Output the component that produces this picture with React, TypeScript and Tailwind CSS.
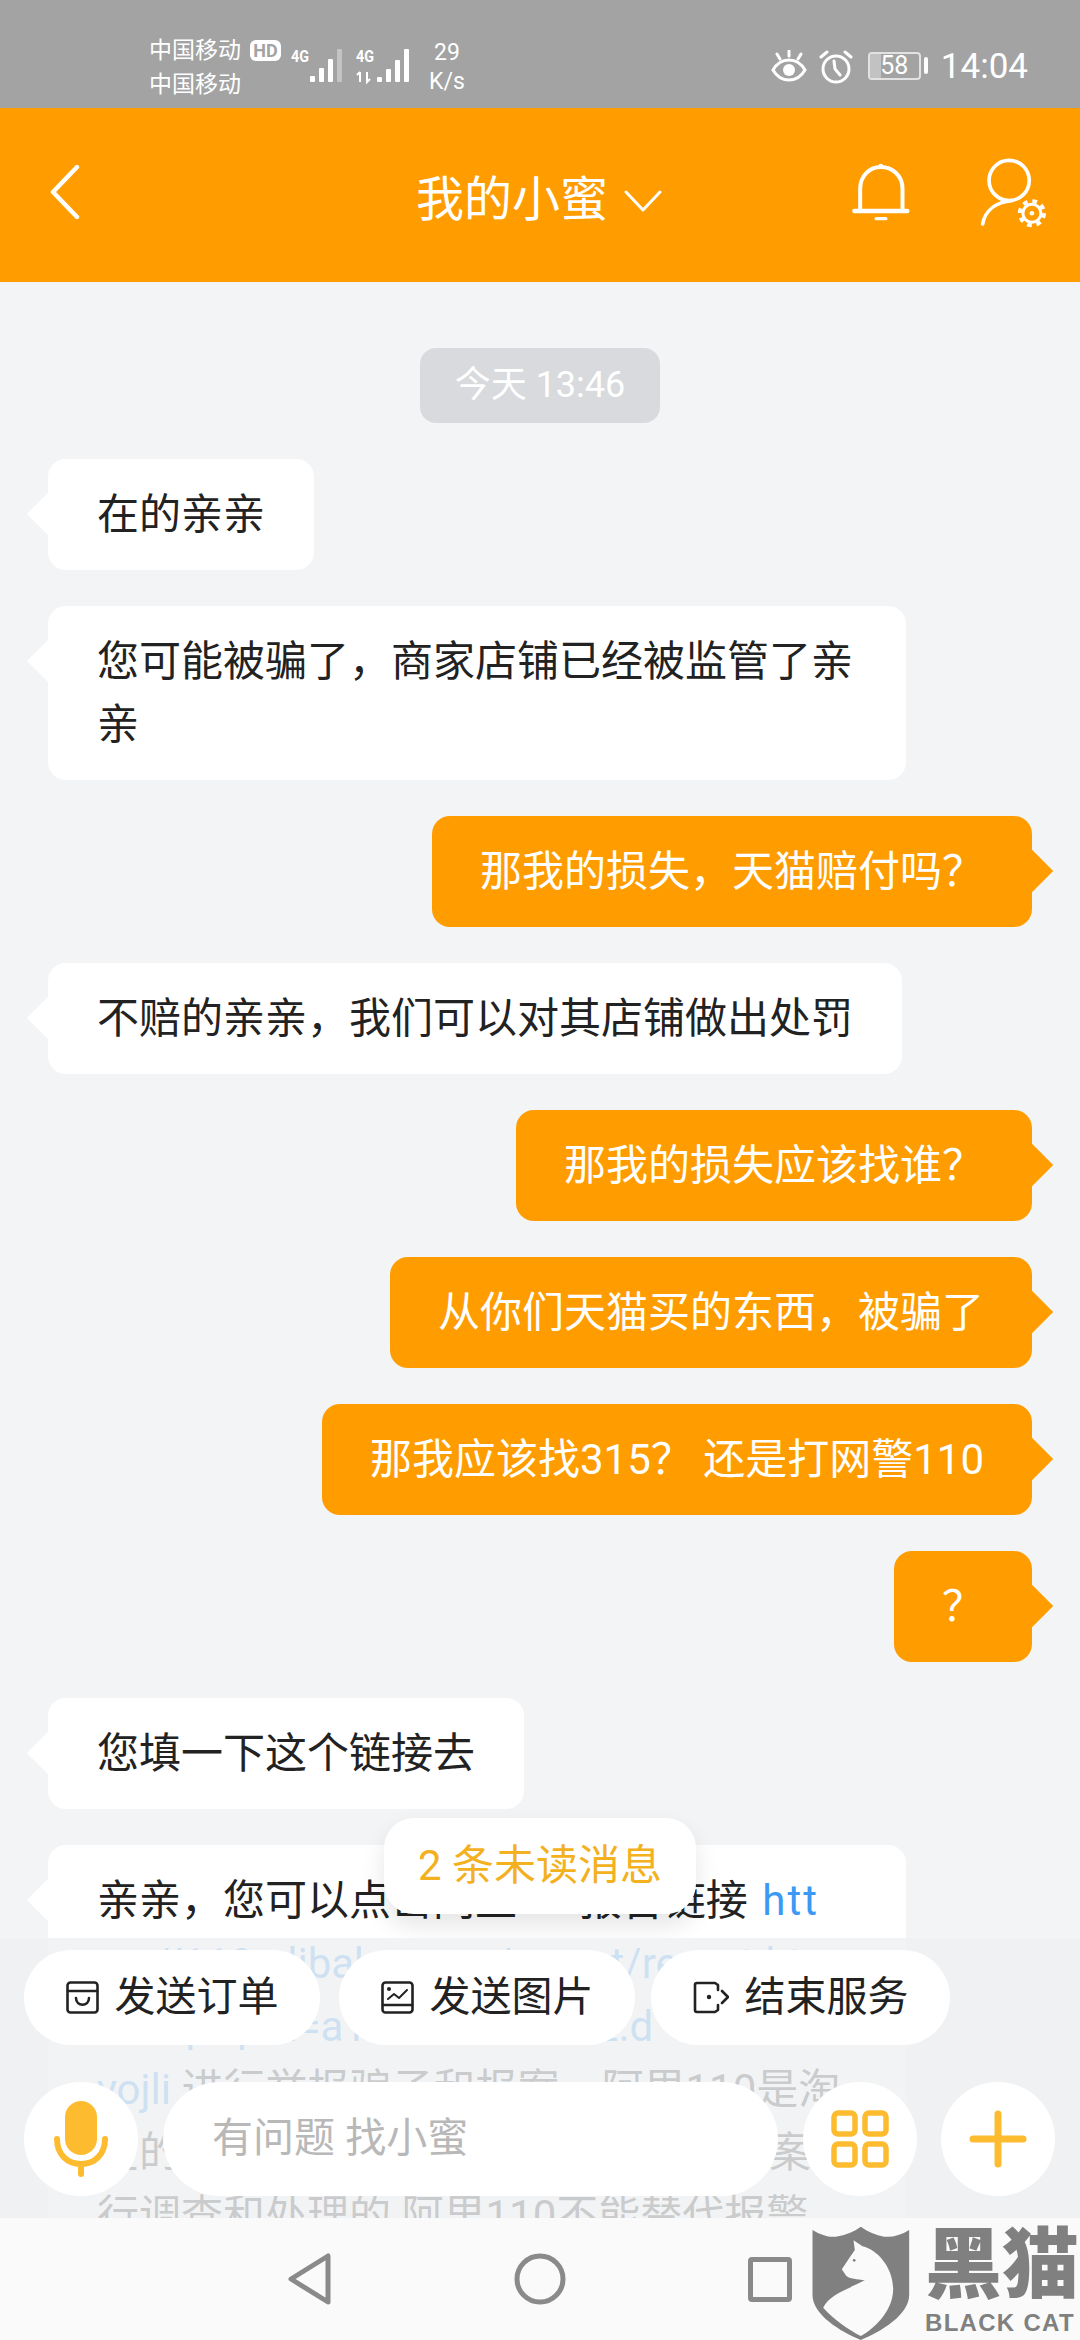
import React from "react";

const Bubble: React.FC<{ mine?: boolean; wide?: boolean; children: React.ReactNode }> = ({ mine, wide, children }) => {
  if (mine) {
    return (
      <div className="relative self-end rounded-[18px] bg-[#ff9c00] px-[48px] py-[24px] text-white">
        <div className="absolute -right-[15px] top-[40px] h-[30px] w-[30px] rotate-45 bg-[#ff9c00]" />
        <p className="relative">{children}</p>
      </div>
    );
  }
  return (
    <div className={`relative max-w-[858px] self-start rounded-[18px] bg-white px-[49px] py-[24px] text-[#222222] ${wide ? "w-[858px]" : ""}`}>
      <div className="absolute -left-[15px] top-[40px] h-[30px] w-[30px] rotate-45 bg-white" />
      <p className="relative">{children}</p>
    </div>
  );
};

const QuickButton: React.FC<{ icon: React.ReactNode; label: string; width: string }> = ({ icon, label, width }) => (
  <button type="button" className={`flex h-[95px] items-center justify-center gap-[16px] rounded-full bg-white text-[41px] text-[#222222] ${width}`}>
    {icon}
    <span>{label}</span>
  </button>
);

const StatusBar = () => (
  <div className="flex h-[108px] shrink-0 items-start bg-[#a3a3a3] pl-[149px] text-white">
    <div className="mt-[34px] flex w-[101px] flex-col text-[23px] leading-[34px]">
      <span>中国移动</span>
      <span>中国移动</span>
    </div>
    <div className="mt-[40px] flex h-[21px] w-[31px] items-center justify-center rounded-[6px] bg-white text-[18px] font-bold text-[#a3a3a3]">HD</div>
    <svg width="120" height="40" viewBox="0 0 120 40" className="mt-[47px] ml-[9px]" fill="white">
      <text x="1" y="15" fontSize="17" fontWeight="700" textLength="18" lengthAdjust="spacingAndGlyphs">4G</text>
      <rect x="20" y="29" width="5" height="6" rx="1" />
      <rect x="29" y="21" width="5" height="14" rx="1" />
      <rect x="38" y="12" width="5" height="23" rx="1" />
      <rect x="47" y="2" width="5" height="33" rx="1" fill="#c4c4c4" />
      <text x="66" y="15" fontSize="17" fontWeight="700" textLength="18" lengthAdjust="spacingAndGlyphs">4G</text>
      <path d="M70 25v10M67 28l3-3M77 25v10l3-3" stroke="white" strokeWidth="2" fill="none" />
      <rect x="87" y="30" width="5" height="5" rx="1" />
      <rect x="96" y="22" width="5" height="13" rx="1" />
      <rect x="105" y="13" width="5" height="22" rx="1" />
      <rect x="114" y="2" width="5" height="33" rx="1" />
    </svg>
    <div className="mt-[38px] ml-[18px] flex w-[38px] flex-col items-center text-[23px] leading-[29px]">
      <span>29</span>
      <span>K/s</span>
    </div>
    <div className="mt-[50px] ml-auto flex items-start pr-[52px]">
      <svg width="36" height="32" viewBox="0 0 36 32" fill="none" stroke="white" strokeWidth="3" strokeLinecap="round">
        <path d="M2 20c4-7 9-10 16-10s12 3 16 10c-4 7-9 10-16 10S6 27 2 20z" />
        <circle cx="18" cy="20" r="6" fill="white" stroke="none" />
        <path d="M18 1v5M6 4l3 5M30 4l-3 5" />
      </svg>
      <svg width="34" height="34" viewBox="0 0 34 34" fill="none" stroke="white" strokeWidth="3" strokeLinecap="round" className="ml-[12px]">
        <circle cx="17" cy="19" r="13" />
        <path d="M15 11l1 8 5 6M2 7l6-5M32 7l-6-5" />
      </svg>
      <div className="relative mt-[2px] ml-[15px] flex h-[28px] w-[53px] items-center justify-center overflow-hidden rounded-[4px] border-[2px] border-[#e2e2e2] text-[25px]">
        <div className="absolute inset-y-0 left-0 w-[11px] bg-[#c2c2c2]" />
        <span className="relative">58</span>
      </div>
      <div className="mt-[7px] ml-[3px] h-[17px] w-[4px] rounded-[2px] bg-white" />
      <span className="-mt-[7px] ml-[13px] text-[35px] leading-[48px]">14:04</span>
    </div>
  </div>
);

const Header = () => (
  <div className="flex h-[174px] shrink-0 items-center bg-[#ff9c00] text-white">
    <svg width="30" height="54" viewBox="0 0 30 54" fill="none" stroke="white" strokeWidth="4.5" strokeLinecap="round" strokeLinejoin="round" className="ml-[50px] -mt-[6px]">
      <path d="M27 2L3 27l24 25" />
    </svg>
    <span className="ml-[336px] mt-[10px] text-[48px] leading-[60px]">我的小蜜</span>
    <svg width="38" height="22" viewBox="0 0 38 22" fill="none" stroke="white" strokeWidth="3" strokeLinecap="round" strokeLinejoin="round" className="ml-[16px] mt-[12px]">
      <path d="M2 2l17 18L36 2" />
    </svg>
    <svg width="62" height="60" viewBox="55 50 185 180" fill="none" stroke="white" strokeWidth="12" strokeLinecap="round" className="ml-[188px] -mt-[6px]">
      <path d="M85 195V130C85 90 115 65 147 65C180 65 212 90 212 130V195" />
      <path d="M68 197H226" strokeWidth="14" />
      <path d="M133 220H162" strokeWidth="10" />
      <circle cx="147" cy="62" r="7" fill="white" stroke="none" />
    </svg>
    <svg width="72" height="72" viewBox="440 35 215 215" fill="none" stroke="white" strokeWidth="11" strokeLinecap="round" className="ml-[67px] -mt-[4px]">
      <circle cx="530" cy="105" r="60" />
      <path d="M451 235C458 195 490 170 540 165" />
      <circle cx="598" cy="203" r="27" strokeWidth="9" />
      <circle cx="598" cy="203" r="36" strokeWidth="12" strokeDasharray="14 14.3" strokeLinecap="butt" />
      <circle cx="598" cy="203" r="7" fill="white" stroke="none" />
    </svg>
  </div>
);

const BottomBar = () => (
  <div className="absolute inset-x-0 bottom-0 flex h-[280px] flex-col bg-[#eff0f2]/[0.82] pt-[12px]">
    <div className="flex pl-[24px]">
      <QuickButton
        width="w-[296px]"
        label="发送订单"
        icon={
          <svg width="33" height="33" viewBox="0 0 33 33" fill="none" stroke="#222" strokeWidth="2.6" strokeLinecap="round">
            <rect x="1.5" y="1.5" width="30" height="30" rx="3" />
            <path d="M2 10h29" />
            <path d="M10 17c0 9 13 9 13 0" />
          </svg>
        }
      />
      <div className="w-[19px]" />
      <QuickButton
        width="w-[296px]"
        label="发送图片"
        icon={
          <svg width="33" height="33" viewBox="0 0 33 33" fill="none" stroke="#222" strokeWidth="2.6" strokeLinecap="round" strokeLinejoin="round">
            <rect x="1.5" y="1.5" width="30" height="30" rx="3" />
            <path d="M2 24h29" />
            <path d="M7 18l6-5 5 4 8-8" strokeWidth="2" />
            <circle cx="8" cy="8" r="2" fill="#222" stroke="none" />
          </svg>
        }
      />
      <div className="w-[16px]" />
      <QuickButton
        width="w-[299px]"
        label="结束服务"
        icon={
          <svg width="36" height="33" viewBox="0 0 36 33" fill="none" stroke="#222" strokeWidth="2.6" strokeLinecap="round" strokeLinejoin="round">
            <path d="M25 9V4L22 2H4a2 2 0 0 0-2 2v25a2 2 0 0 0 2 2h18l3-2v-5" />
            <path d="M29 10l6 6-6 6" />
            <circle cx="16" cy="16" r="2.2" fill="#222" stroke="none" />
          </svg>
        }
      />
    </div>
    <div className="mt-[37px] flex items-center gap-[25px] pl-[24px]">
      <button type="button" className="flex h-[114px] w-[114px] items-center justify-center rounded-full bg-white">
        <svg width="54" height="76" viewBox="0 0 54 76" fill="none" stroke="#fdbc2f" strokeWidth="6" strokeLinecap="round">
          <rect x="11" y="0" width="32" height="54" rx="16" fill="#fdbc2f" stroke="none" />
          <path d="M3 38c0 15 10 25 24 25s24-10 24-25" />
          <path d="M27 63v10" />
        </svg>
      </button>
      <div className="flex h-[114px] w-[615px] items-center rounded-full bg-white pl-[49px] text-[41px] text-[#b8b8b8]">
        有问题 找小蜜
      </div>
      <button type="button" className="flex h-[114px] w-[114px] items-center justify-center rounded-full bg-white">
        <svg width="58" height="58" viewBox="0 0 58 58" fill="none" stroke="#fdbc2f" strokeWidth="5.5">
          <rect x="3" y="3" width="21" height="21" rx="4" />
          <rect x="34" y="3" width="21" height="21" rx="4" />
          <rect x="3" y="34" width="21" height="21" rx="4" />
          <rect x="34" y="34" width="21" height="21" rx="4" />
        </svg>
      </button>
      <button type="button" className="-ml-[1px] flex h-[114px] w-[114px] items-center justify-center rounded-full bg-white">
        <svg width="58" height="58" viewBox="0 0 58 58" fill="none" stroke="#fdbc2f" strokeWidth="7" strokeLinecap="round">
          <path d="M29 4v50M4 29h50" />
        </svg>
      </button>
    </div>
  </div>
);

const NavBar = () => (
  <div className="flex h-[122px] shrink-0 items-center bg-[#fafafa] pl-[287px]">
    <svg width="44" height="52" viewBox="0 0 44 52" fill="none" stroke="#8a8a8a" strokeWidth="5" strokeLinejoin="round">
      <path d="M41 3v46L4 26z" />
    </svg>
    <svg width="52" height="52" viewBox="0 0 52 52" fill="none" stroke="#8a8a8a" strokeWidth="5" className="ml-[183px]">
      <circle cx="26" cy="26" r="23" />
    </svg>
    <div className="ml-[182px] h-[45px] w-[44px] rounded-[4px] border-[5px] border-[#8a8a8a]" />
  </div>
);

const Watermark = () => (
  <div className="absolute bottom-0 right-0 flex h-[115px] w-[269px] items-start text-[#808080]">
    <svg width="100" height="115" viewBox="92 70 297 345">
      <path d="M95 85C120 100 145 108 165 105C195 100 220 90 240 75C260 90 285 100 310 105C335 108 360 100 385 85V280C385 340 300 390 240 415C180 390 95 340 95 280Z" fill="#808080" />
      <path d="M218 116L245 134C290 145 335 195 337 260C338 320 290 375 240 403C205 385 160 355 127 318C145 280 195 265 252 236C230 232 205 232 196 222L183 203L205 170L222 145Z" fill="#fafafa" />
      <circle cx="220" cy="176" r="4" fill="#808080" />
    </svg>
    <div className="ml-[14px] flex w-[155px] flex-col">
      <span className="whitespace-nowrap text-[77px] font-black leading-[82px]">黑猫</span>
      <span className="mt-[4px] whitespace-nowrap font-['Liberation_Sans',sans-serif] text-[24px] font-bold leading-[24px] tracking-[1.3px]">BLACK CAT</span>
    </div>
  </div>
);

export default function App() {
  return (
    <div className="relative flex h-[2340px] w-[1080px] flex-col overflow-hidden bg-[#f3f4f6] font-['Roboto','Noto_Sans_CJK_SC',sans-serif]">
      <StatusBar />
      <Header />
      <main className="relative min-h-0 flex-1 overflow-hidden">
        <div className="flex flex-col gap-[36px] px-[48px] pt-[66px] text-[42px] leading-[63px]">
          <div className="flex h-[75px] w-[240px] items-center justify-center self-center rounded-[16px] bg-[#d8dadd] text-[36px] text-white">
            今天 13:46
          </div>
          <Bubble>在的亲亲</Bubble>
          <Bubble>您可能被骗了，商家店铺已经被监管了亲亲</Bubble>
          <Bubble mine>那我的损失，天猫赔付吗？</Bubble>
          <Bubble>不赔的亲亲，我们可以对其店铺做出处罚</Bubble>
          <Bubble mine>那我的损失应该找谁？</Bubble>
          <Bubble mine>从你们天猫买的东西，被骗了</Bubble>
          <Bubble mine>那我应该找315？ 还是打网警110</Bubble>
          <Bubble mine>？</Bubble>
          <Bubble>您填一下这个链接去</Bubble>
          <Bubble wide>
            亲亲，您可以点击网上 一 报告链接 <span className="ml-[4px] tracking-[2px] text-[#3b99f5]">htt</span>
            <br />
            <span className="text-[#3b99f5]">ps://110.alibaba.com/report/report.ht</span>
            <br />
            <span className="text-[#3b99f5]">m/xq?spm=a1z0e.aFa234.2.d</span>
            <br />
            <span className="text-[#3b99f5]">yojli</span> 进行举报骗子和报案，阿里110是淘
            <br />
            宝的官方投诉平台，用于举报骗子备案，
            <br />
            行调查和处理的 阿里110不能替代报警
          </Bubble>
        </div>
        <div className="absolute left-[384px] top-[1536px] flex h-[96px] w-[312px] items-center justify-center rounded-[30px] bg-white pb-[2px] text-[42px] text-[#f3b11f] shadow-[0_12px_24px_rgba(0,0,0,0.10)]">
          2 条未读消息
        </div>
        <BottomBar />
      </main>
      <NavBar />
      <Watermark />
    </div>
  );
}
